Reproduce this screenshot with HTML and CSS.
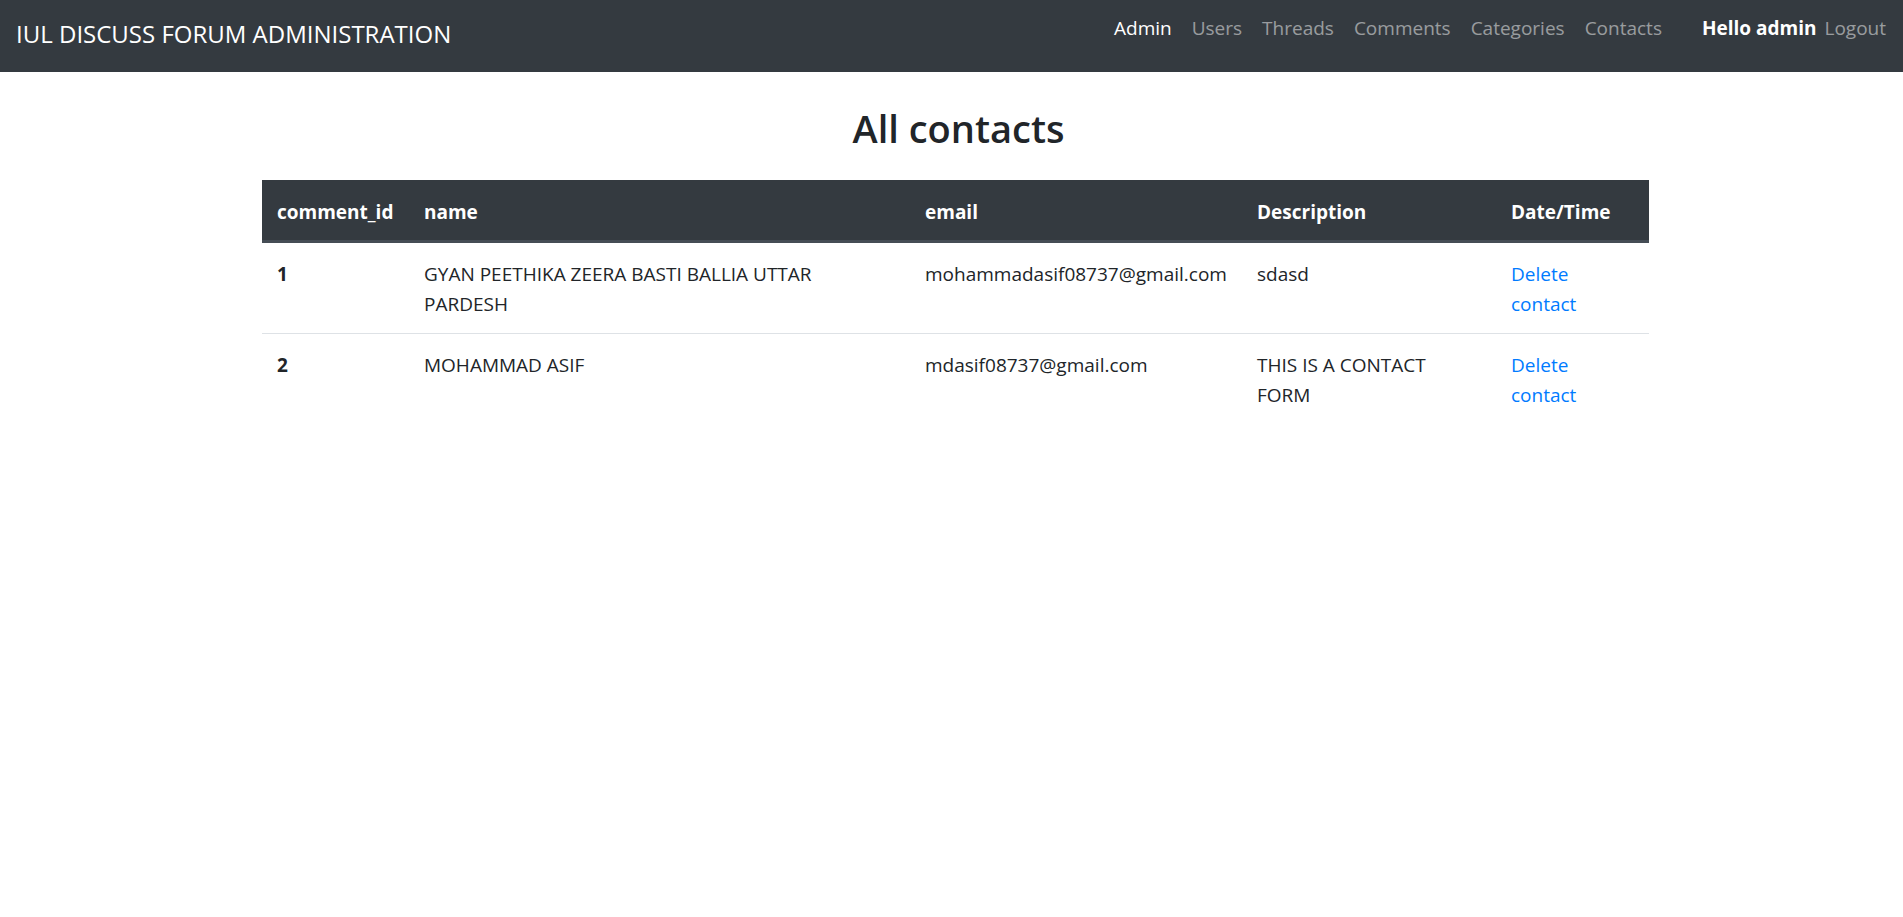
FILE: index.html
```html
<!DOCTYPE html>
<html lang="en">
<head>
<meta charset="utf-8">
<title>All contacts</title>
<link rel="stylesheet" href="styles.css">
</head>
<body>
<nav class="navbar">
  <a class="brand" href="#">IUL DISCUSS FORUM ADMINISTRATION</a>
  <ul class="nav-links">
    <li><a class="nav-link active" href="#">Admin</a></li>
    <li><a class="nav-link" href="#">Users</a></li>
    <li><a class="nav-link" href="#">Threads</a></li>
    <li><a class="nav-link" href="#">Comments</a></li>
    <li><a class="nav-link" href="#">Categories</a></li>
    <li><a class="nav-link" href="#">Contacts</a></li>
  </ul>
  <div class="user-box">
    <span class="hello">Hello admin</span>
    <a class="logout" href="#">Logout</a>
  </div>
</nav>
<main class="container">
  <h2 class="page-title">All contacts</h2>
  <table class="data-table">
    <colgroup>
      <col class="c-id">
      <col class="c-name">
      <col class="c-email">
      <col class="c-desc">
      <col class="c-date">
    </colgroup>
    <thead>
      <tr>
        <th>comment_id</th>
        <th>name</th>
        <th>email</th>
        <th>Description</th>
        <th>Date/Time</th>
      </tr>
    </thead>
    <tbody>
      <tr>
        <th class="row-id">1</th>
        <td>GYAN PEETHIKA ZEERA BASTI BALLIA UTTAR PARDESH</td>
        <td>mohammadasif08737@gmail.com</td>
        <td>sdasd</td>
        <td><a class="del-link" href="#">Delete contact</a></td>
      </tr>
      <tr>
        <th class="row-id">2</th>
        <td>MOHAMMAD ASIF</td>
        <td>mdasif08737@gmail.com</td>
        <td>THIS IS A CONTACT FORM</td>
        <td><a class="del-link" href="#">Delete contact</a></td>
      </tr>
    </tbody>
  </table>
</main>
</body>
</html>
```
FILE: styles.css
```css
* { box-sizing: border-box; }
html, body {
  margin: 0;
  padding: 0;
  background: #fff;
}
body {
  font-family: "Open Sans", "Noto Sans", sans-serif;
  font-size: 20px;
  line-height: 30px;
  color: #212529;
}
a { text-decoration: none; }

.navbar {
  height: 72px;
  background: #343a40;
  display: flex;
  align-items: flex-start;
  padding: 0 17px 0 16px;
}
.brand {
  color: #fff;
  font-size: 24px;
  line-height: 36px;
  margin-top: 16px;
  white-space: nowrap;
}
.nav-links {
  list-style: none;
  display: flex;
  margin: 13px 0 0 auto;
  padding: 0;
}
.nav-link {
  display: block;
  padding: 0 10px;
  font-size: 19px;
  line-height: 30px;
  color: rgba(255,255,255,.5);
}
.nav-link.active { color: #fff; }
.user-box {
  display: flex;
  margin: 13px 0 0 30px;
  font-size: 19px;
  line-height: 30px;
}
.hello {
  color: #fff;
  font-weight: 700;
}
.logout {
  color: rgba(255,255,255,.5);
  padding-left: 8px;
}

.container {
  width: 1387px;
  margin: 0 0 0 262px;
  padding-top: 32px;
}
.page-title {
  margin: 0 0 28px;
  text-align: center;
  font-size: 38px;
  line-height: 48px;
  font-weight: 600;
  transform: translateX(3px);
}

.data-table {
  width: 1387px;
  table-layout: fixed;
  border-collapse: collapse;
}
.c-id { width: 147px; }
.c-name { width: 501px; }
.c-email { width: 332px; }
.c-desc { width: 254px; }
.c-date { width: 153px; }

.data-table th,
.data-table td {
  text-align: left;
  vertical-align: top;
  padding: 16px 15px 14px;
  line-height: 30px;
}
.data-table thead th {
  background: #343a40;
  color: #fff;
  font-weight: 700;
  font-size: 19px;
  padding-top: 17px;
  padding-bottom: 13px;
  border-bottom: 3px solid #454d55;
}
.data-table td {
  font-size: 19px;
}
.data-table tbody tr + tr th,
.data-table tbody tr + tr td {
  border-top: 1px solid #dee2e6;
}
.row-id {
  font-weight: 700;
  font-size: 19px;
}
.del-link { color: #007bff; }
```
